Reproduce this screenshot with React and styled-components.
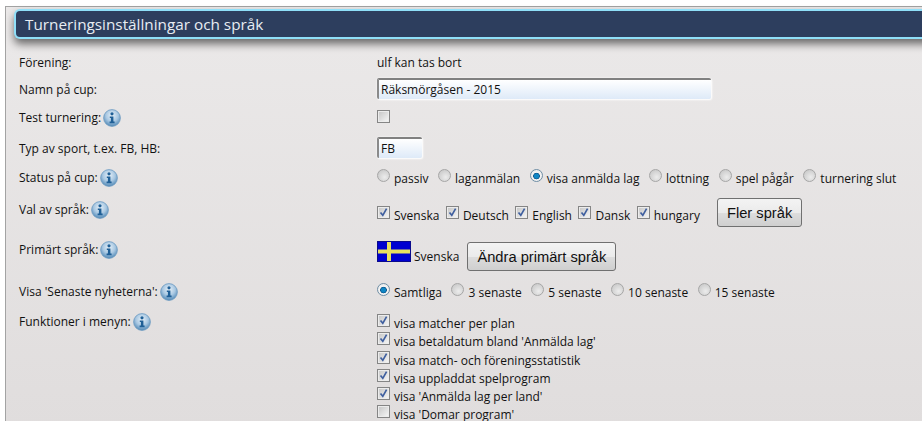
import React from 'react'
import styled, { createGlobalStyle } from 'styled-components'

const Global = createGlobalStyle`
  html, body {
    margin: 0;
    height: 421px;
    overflow: hidden;
    background: #fff;
  }
`

const Page = styled.div`
  padding: 6px 0 0 5px;
  width: 960px;
  font-family: 'Open Sans', 'Noto Sans', sans-serif;
  font-size: 12px;
  color: #111;
`

const Panel = styled.div`
  box-sizing: border-box;
  height: 500px;
  padding: 2px 0 0 8px;
  border: 1px solid #a3a3a3;
  border-width: 1px 0 0 1px;
  background: linear-gradient(#ebe9e9, #e0dddd 420px);
`

const Header = styled.h2`
  box-sizing: border-box;
  height: 30px;
  margin: 0 0 11px;
  padding: 0 0 1px 9px;
  display: flex;
  align-items: center;
  border: 2px solid #8fdff8;
  border-right: 0;
  border-radius: 6px 0 0 6px;
  background: #2d3e5e;
  box-shadow: 0 5px 8px rgba(0, 0, 0, 0.55);
  color: #e8edf3;
  font-size: 15.3px;
  font-weight: 400;
`

const Row = styled.div`
  display: grid;
  grid-template-columns: 358px 1fr;
  margin-left: 5px;
  height: ${p => p.$h}px;
`

const Label = styled.div`
  display: flex;
  align-items: flex-start;
  gap: 2px;
  line-height: 18px;
  padding-top: ${p => p.$top || 0}px;
`

const Value = styled.div`
  display: flex;
  flex-direction: ${p => (p.$list ? 'column' : 'row')};
  align-items: ${p => p.$align || 'center'};
  padding-top: ${p => p.$top || 0}px;
  height: fit-content;
`

const TextInput = styled.div`
  box-sizing: border-box;
  width: ${p => p.$w}px;
  height: 21px;
  padding: 1px 0 0 2px;
  border-top: 2px solid #808080;
  border-left: 2px solid #8a8a8a;
  border-radius: 2px;
  background: linear-gradient(#fff, #deeaf8);
  box-shadow: 1px 1px 2px #fff, 0 0 2px #fff;
  line-height: 17px;
  color: #111;
`

const Box = styled.span`
  box-sizing: border-box;
  flex: none;
  display: inline-flex;
  width: 13px;
  height: 13px;
  border: 1px solid #858585;
  background: linear-gradient(135deg, #c4c4c4, #f8f8f8);
  box-shadow: inset 0 0 0 1px #ececec;
  transform: translateY(-3px);
`

const Dot = styled.span`
  box-sizing: border-box;
  flex: none;
  display: inline-block;
  width: 13px;
  height: 13px;
  border-radius: 50%;
  border: 1px solid ${p => (p.$on ? '#6f8ea5' : '#a6a6a6')};
  background: ${p =>
    p.$on
      ? 'radial-gradient(circle at 50% 55%, #0f86c4 0 2.2px, #0a4f85 3px, #f4f4f4 3.6px, #e2e2e2)'
      : 'radial-gradient(circle at 60% 65%, #ececec, #c2c2c2)'};
  transform: translateY(-3px);
`

const Option = styled.span`
  display: inline-flex;
  align-items: center;
  gap: 4px;
  margin-right: ${p => p.$gap ?? 9.6}px;
  padding-top: ${p => p.$pad || 0}px;
  white-space: nowrap;
`

const ListItem = styled(Option)`
  height: ${p => p.$h || 18}px;
  margin-right: 0;
`

const Button = styled.button`
  box-sizing: border-box;
  height: 29px;
  margin: ${p => p.$top || 0}px 0 0 ${p => p.$left}px;
  padding: 0 9px;
  border: 1px solid #707070;
  border-radius: 3px;
  background: linear-gradient(#f3f3f3 0, #ebebeb 50%, #dddddd 51%, #cfcfcf 100%);
  font-family: 'Liberation Sans', Arial, sans-serif;
  font-size: 14.7px;
  color: #111;
`

const InfoSvg = styled.svg`
  flex: none;
`

const FlagSvg = styled.svg`
  flex: none;
`

const Info = () => (
  <InfoSvg width="18" height="18" viewBox="0 0 18 18">
    <defs>
      <radialGradient id="infoBg" cx="50%" cy="35%" r="65%">
        <stop offset="0" stopColor="#e8f1f8" />
        <stop offset="0.55" stopColor="#a9c8e2" />
        <stop offset="1" stopColor="#4f87b5" />
      </radialGradient>
    </defs>
    <circle cx="9" cy="9" r="8.4" fill="url(#infoBg)" stroke="#6f9cc2" strokeWidth="0.8" />
    <circle cx="9" cy="4.8" r="1.6" fill="#1f5f96" />
    <path d="M6.8 7.4H10.4V12.6H11.6V14.2H6.6V12.6H7.9V9H6.8Z" fill="#1f5f96" />
  </InfoSvg>
)

const Check = ({ on }) => (
  <Box>
    {on && (
      <svg width="11" height="11" viewBox="0 0 11 11">
        <path d="M2.5 5.5L4.8 8.3L8.6 1.6" fill="none" stroke="#3f5f9f" strokeWidth="1.7" />
      </svg>
    )}
  </Box>
)

const Flag = () => (
  <FlagSvg width="34" height="21" viewBox="0 0 34 21">
    <rect width="34" height="21" fill="#0a0a8c" />
    <rect x="1" y="1" width="32" height="19" fill="#0000d0" />
    <rect x="10" y="1" width="4" height="19" fill="#e8e060" />
    <rect x="1" y="8.5" width="32" height="4" fill="#e8e060" />
  </FlagSvg>
)

const FlagRow = styled.div`
  display: flex;
  align-items: flex-end;
  gap: 3px;
  line-height: 11px;
`

const status = ['passiv', 'laganmälan', 'visa anmälda lag', 'lottning', 'spel pågår', 'turnering slut']
const languages = ['Svenska', 'Deutsch', 'English', 'Dansk', 'hungary']
const news = ['Samtliga', '3 senaste', '5 senaste', '10 senaste', '15 senaste']
const menu = [
  ['visa matcher per plan', true, 18],
  ["visa betaldatum bland 'Anmälda lag'", true, 19],
  ['visa match- och föreningsstatistik', true, 18],
  ['visa uppladdat spelprogram', true, 18],
  ["visa 'Anmälda lag per land'", true, 18],
  ["visa 'Domar program'", false, 18],
]

export default function App() {
  return (
    <Page>
      <Global />
      <Panel>
        <Header>Turneringsinställningar och språk</Header>
        <Row $h={27}>
          <Label $top={4}>Förening:</Label>
          <Value $top={4}>ulf kan tas bort</Value>
        </Row>
        <Row $h={28}>
          <Label $top={4}>Namn på cup:</Label>
          <Value $top={1}><TextInput $w={334}>Räksmörgåsen - 2015</TextInput></Value>
        </Row>
        <Row $h={30}>
          <Label $top={4}>Test turnering: <Info /></Label>
          <Value $top={8}><Check /></Value>
        </Row>
        <Row $h={30}>
          <Label $top={5}>Typ av sport, t.ex. FB, HB:</Label>
          <Value $top={2}><TextInput $w={45}>FB</TextInput></Value>
        </Row>
        <Row $h={30}>
          <Label $top={4}>Status på cup: <Info /></Label>
          <Value $top={5}>
            {status.map((s, i) => <Option key={s}><Dot $on={i === 2} />{s}</Option>)}
          </Value>
        </Row>
        <Row $h={36}>
          <Label $top={6}>Val av språk: <Info /></Label>
          <Value $top={3}>
            {languages.map(s => <Option key={s} $gap={6.5} $pad={5}><Check on />{s}</Option>)}
            <Button $left={10.5}>Fler språk</Button>
          </Value>
        </Row>
        <Row $h={47}>
          <Label $top={10}>Primärt språk: <Info /></Label>
          <Value $top={10} $align="flex-start">
            <FlagRow><Flag />Svenska</FlagRow>
            <Button $left={8} $top={1}>Ändra primärt språk</Button>
          </Value>
        </Row>
        <Row $h={35}>
          <Label $top={5}>Visa 'Senaste nyheterna': <Info /></Label>
          <Value $top={6}>
            {news.map((s, i) => <Option key={s}><Dot $on={i === 0} />{s}</Option>)}
          </Value>
        </Row>
        <Row $h={120}>
          <Label>Funktioner i menyn: <Info /></Label>
          <Value $list $align="flex-start" $top={1}>
            {menu.map(([s, on, h]) => <ListItem key={s} $h={h}><Check on={on} />{s}</ListItem>)}
          </Value>
        </Row>
      </Panel>
    </Page>
  )
}
